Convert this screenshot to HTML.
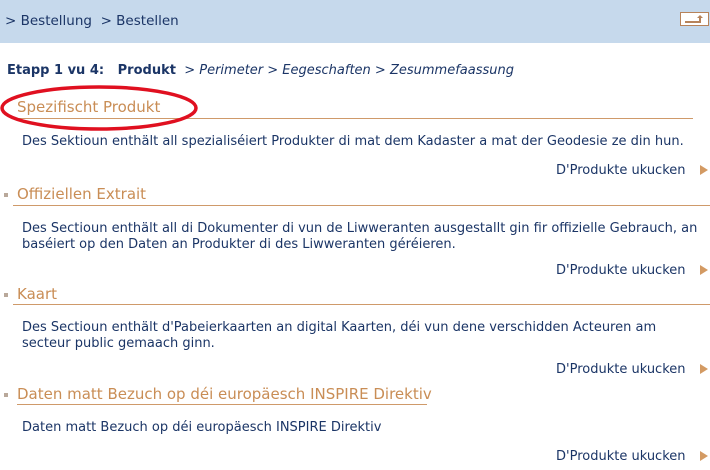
<!DOCTYPE html>
<html><head><meta charset="utf-8"><style>
body{margin:0;width:710px;height:470px;background:#fff;position:relative;overflow:hidden;font-family:"DejaVu Sans","Liberation Sans",sans-serif;color:#1b3566}
.a{position:absolute;white-space:nowrap}
.hdr{position:absolute;left:0;top:0;width:710px;height:43px;background:#c6d9ec}
.t{font-size:15px;color:#c98d55}
.b{font-size:13px}
.ln{position:absolute;height:1px;background:#cf9a6a}
.bul{position:absolute;width:4px;height:4px;background:#b9a89a}
.tri{position:absolute;width:0;height:0;border-top:5px solid transparent;border-bottom:5px solid transparent;border-left:8px solid #d39a63}
</style></head><body>
<div class="hdr"></div>
<div class="a" style="left:5px;top:13px;font-size:13.5px">&gt; Bestellung &nbsp;&gt; Bestellen</div>
<svg class="a" style="left:680px;top:12px" width="29" height="14"><rect x="0.5" y="0.5" width="28" height="13" fill="#fff" stroke="#b7835a"/><path d="M5 10H20V6" fill="none" stroke="#b7835a" stroke-width="2"/><path d="M17 6H23L20 3Z" fill="#b7835a"/></svg>
<div class="a" style="left:7px;top:63px;font-size:13px"><b>Etapp 1 vu 4: &nbsp; Produkt</b> &nbsp;<i>&gt; Perimeter &gt; Eegeschaften &gt; Zesummefaassung</i></div>

<div class="a t" style="left:17px;top:98px">Spezifischt Produkt</div>
<div class="ln" style="left:13px;top:118px;width:680px"></div>
<svg class="a" style="left:0;top:84px" width="202" height="48"><ellipse cx="99" cy="24" rx="97" ry="21" fill="none" stroke="#e01020" stroke-width="3.5"/></svg>
<div class="a b" style="left:22px;top:134px">Des Sektioun enthält all spezialiséiert Produkter di mat dem Kadaster a mat der Geodesie ze din hun.</div>
<div class="a b" style="left:556px;top:163px">D'Produkte ukucken</div><div class="tri" style="left:700px;top:165px"></div>

<div class="bul" style="left:4px;top:193px"></div>
<div class="a t" style="left:17px;top:185px">Offiziellen Extrait</div>
<div class="ln" style="left:13px;top:205px;width:697px"></div>
<div class="a b" style="left:22px;top:221px">Des Sectioun enthält all di Dokumenter di vun de Liwweranten ausgestallt gin fir offizielle Gebrauch, an</div>
<div class="a b" style="left:22px;top:237px">baséiert op den Daten an Produkter di des Liwweranten géréieren.</div>
<div class="a b" style="left:556px;top:263px">D'Produkte ukucken</div><div class="tri" style="left:700px;top:265px"></div>

<div class="bul" style="left:4px;top:293px"></div>
<div class="a t" style="left:17px;top:285px">Kaart</div>
<div class="ln" style="left:13px;top:304px;width:697px"></div>
<div class="a b" style="left:22px;top:320px">Des Sectioun enthält d'Pabeierkaarten an digital Kaarten, déi vun dene verschidden Acteuren am</div>
<div class="a b" style="left:22px;top:336px">secteur public gemaach ginn.</div>
<div class="a b" style="left:556px;top:362px">D'Produkte ukucken</div><div class="tri" style="left:700px;top:364px"></div>

<div class="bul" style="left:4px;top:393px"></div>
<div class="a t" style="left:17px;top:385px">Daten matt Bezuch op déi europäesch INSPIRE Direktiv</div>
<div class="ln" style="left:17px;top:404px;width:410px"></div>
<div class="a b" style="left:22px;top:420px">Daten matt Bezuch op déi europäesch INSPIRE Direktiv</div>
<div class="a b" style="left:556px;top:449px">D'Produkte ukucken</div><div class="tri" style="left:700px;top:451px"></div>
</body></html>
